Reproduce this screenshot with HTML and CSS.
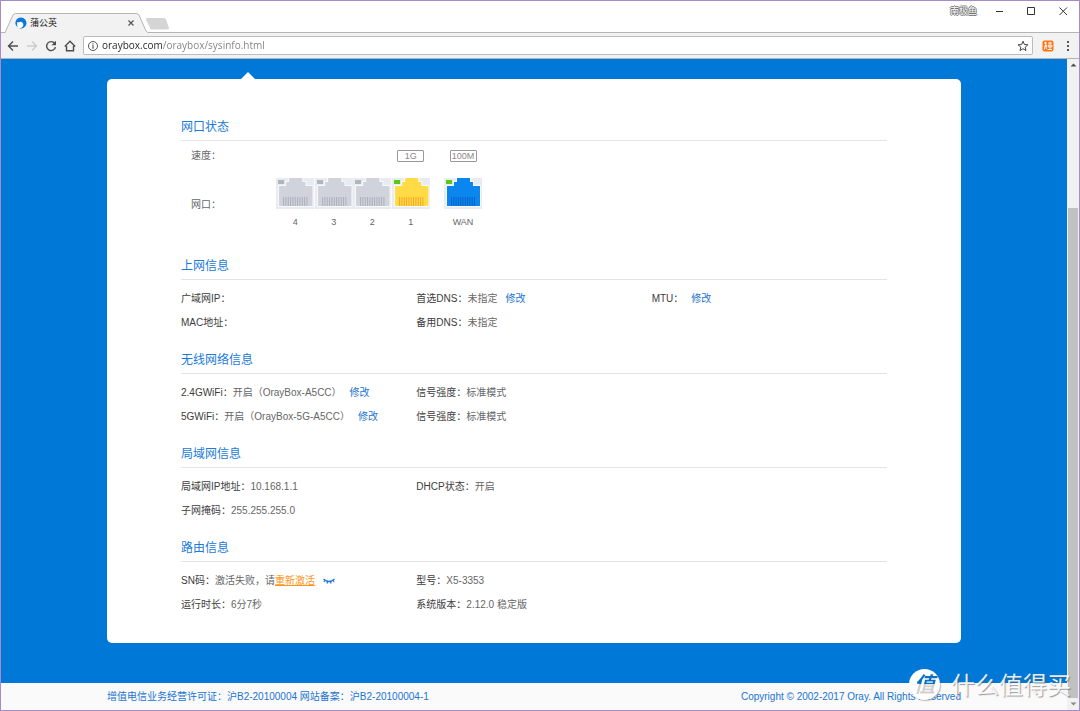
FILE: index.html
```
<!DOCTYPE html>
<html lang="zh-CN">
<head>
<meta charset="utf-8">
<meta name="viewport" content="width=device-width, initial-scale=1">
<title>蒲公英</title>
<link rel="stylesheet" href="styles.css">
</head>
<body>
<svg class="defs" aria-hidden="true">
  <defs>
    <symbol id="port" viewBox="0 0 38 31" preserveAspectRatio="none">
      <rect width="38" height="31" fill="#e8ebf2"/>
      <path d="M12 0H27V3H30V7H37V29H2V7H9V3H12Z" fill="#f8f9fc"/>
      <path d="M13 0H26V4H29V8H36V28H3V8H10V4H13Z" fill="currentColor"/>
      <path d="M7.5 19V28M9.800 19V28M12.100 19V28M14.400 19V28M16.700 19V28M19 19V28M21.300 19V28M23.600 19V28M25.900 19V28M28.200 19V28M30.500 19V28" class="pins"/>
      <rect x="2" y="2" width="6" height="4" class="led"/>
    </symbol>
  </defs>
</svg>
<div class="window">
  <header class="tabstrip">
    <div class="tab">
      <svg class="tab-shape" viewBox="0 0 166 20" aria-hidden="true">
        <path d="M0 19.500H4.500L12 2Q13 .5 14.500 .5H135Q137 .5 138 2L145 18Q146 19.500 148 19.500V20H0Z" fill="#f2f2f2"/>
        <path d="M0 19.500H4L12 2Q13 .5 14.500 .5H135Q137 .5 138 2L145 18Q146 19.500 148 19.500H166" fill="none" stroke="#b5b5b5"/>
        <path d="M145.500 5H163Q164.500 5 165 6.500L168 15Q168 16.500 166 16.500H151Q149.500 16.500 149 15L145 6.500Z" fill="#d5d5d5"/>
      </svg>
      <svg class="favicon" viewBox="0 0 12 12" aria-hidden="true"><path d="M6 .5A5.500 5.500 0 1 1 4.500 11.300Q7.500 11 8.300 8.500Q8.800 5.500 6 4.800Q4.500 4.500 3.500 5.500Q2.800 4.500 2 5.500Q1.600 6.500 2.500 7.200Q2.300 8.500 3 9.800L2.500 10.300A5.500 5.500 0 0 1 6 .5Z" fill="#0877d8"/><circle cx="5" cy="8" r="2.800" fill="#fff"/></svg>
      <span class="tab-title">蒲公英</span>
      <button class="tab-close" aria-label="关闭标签页"><svg viewBox="0 0 8 8"><path d="M1.500 1.500 6.500 6.500M6.500 1.500 1.500 6.500" stroke="#555" stroke-width="1.200"/></svg></button>
    </div>
    <div class="controls">
      <span class="user">南极鱼</span>
      <button aria-label="最小化"><svg viewBox="0 0 10 10"><path d="M2 5.500H9" stroke="#333"/></svg></button>
      <button aria-label="最大化"><svg viewBox="0 0 10 10"><path d="M1.500 1.500H8.500V8.500H1.500Z" stroke="#333" fill="none"/></svg></button>
      <button aria-label="关闭"><svg viewBox="0 0 10 10"><path d="M1.500 1.500 9 9M9 1.500 1.500 9" stroke="#333"/></svg></button>
    </div>
  </header>
  <nav class="toolbar">
    <button aria-label="后退"><svg viewBox="0 0 12 12"><path d="M11 6H1.500M6 1.500 1.500 6 6 10.500" class="ink"/></svg></button>
    <button aria-label="前进" disabled><svg viewBox="0 0 12 12"><path d="M1 6H10.500M6 1.500 10.500 6 6 10.500" class="ink faint"/></svg></button>
    <button aria-label="重新加载"><svg viewBox="0 0 12 12"><path d="M9.800 3.500A4.500 4.500 0 1 0 10.500 7.200" class="ink"/><path d="M11 .8V5.300H6.500Z" fill="#4d4d4d"/></svg></button>
    <button aria-label="主页"><svg viewBox="0 0 12 12"><path d="M.8 6.500 6 1.300 11.200 6.500M2.500 6V10.800H9.500V6" class="ink"/></svg></button>
    <div class="omnibox">
      <svg viewBox="0 0 12 12" aria-hidden="true"><circle cx="6" cy="6" r="4.500" fill="none" stroke="#555"/><path d="M6 5.200V8.700M6 3.200V4.400" stroke="#555" stroke-width="1.200"/></svg>
      <input class="url" type="text" aria-label="地址" value="oraybox.com/oraybox/sysinfo.html">
      <button aria-label="收藏"><svg viewBox="0 0 12 12"><path d="M6 1.200 7.400 4.500 10.900 4.800 8.200 7.100 9 10.600 6 8.700 3 10.600 3.800 7.100 1.100 4.800 4.600 4.500Z" fill="none" stroke="#444"/></svg></button>
    </div>
    <button aria-label="扩展"><svg viewBox="0 0 12 12"><rect x=".5" y=".5" width="11" height="11" rx="2" fill="#fb7413"/><path d="M2 3H5M3.500 1.800V4.500L2.300 9.500M2.500 6H5M4.200 4.500V9M6 3H10M8 1.800V4.300M6.200 5H9.800V7H6.200ZM8 5V9M5.500 9.500H10" fill="none" stroke="#fff" stroke-width=".9"/></svg></button>
    <button aria-label="菜单"><svg viewBox="0 0 12 12"><path d="M5 1H7V3H5ZM5 5H7V7H5ZM5 9H7V11H5Z" fill="#555"/></svg></button>
  </nav>
  <div class="viewport">
    <div class="page">
      <main class="backdrop">
        <div class="card">
          <section>
            <h2>网口状态</h2>
            <div class="ports">
              <div class="port-row speeds">
                <span class="port-label">速度：</span>
                <div class="lan"><span></span><span></span><span></span><span class="badge">1G</span></div>
                <div class="wan"><span class="badge">100M</span></div>
              </div>
              <div class="port-row sockets">
                <span class="port-label">网口：</span>
                <div class="lan">
                  <div class="port"><svg class="off"><use href="#port"/></svg><span>4</span></div>
                  <div class="port"><svg class="off"><use href="#port"/></svg><span>3</span></div>
                  <div class="port"><svg class="off"><use href="#port"/></svg><span>2</span></div>
                  <div class="port"><svg class="gigabit"><use href="#port"/></svg><span>1</span></div>
                </div>
                <div class="wan"><div class="port"><svg class="uplink"><use href="#port"/></svg><span>WAN</span></div></div>
              </div>
            </div>
          </section>
          <section>
            <h2>上网信息</h2>
            <dl>
              <div><dt>广域网IP：</dt></div>
              <div><dt>首选DNS：</dt><dd>未指定</dd><dd><a class="edit" href="#dns">修改</a></dd></div>
              <div><dt>MTU：</dt><dd><a class="edit" href="#mtu">修改</a></dd></div>
              <div><dt>MAC地址：</dt></div>
              <div><dt>备用DNS：</dt><dd>未指定</dd></div>
            </dl>
          </section>
          <section>
            <h2>无线网络信息</h2>
            <dl>
              <div><dt>2.4GWiFi：</dt><dd>开启（OrayBox-A5CC）</dd><dd><a class="edit" href="#wifi24">修改</a></dd></div>
              <div class="wide"><dt>信号强度：</dt><dd>标准模式</dd></div>
              <div><dt>5GWiFi：</dt><dd>开启（OrayBox-5G-A5CC）</dd><dd><a class="edit" href="#wifi5">修改</a></dd></div>
              <div class="wide"><dt>信号强度：</dt><dd>标准模式</dd></div>
            </dl>
          </section>
          <section>
            <h2>局域网信息</h2>
            <dl>
              <div><dt>局域网IP地址：</dt><dd>10.168.1.1</dd></div>
              <div class="wide"><dt>DHCP状态：</dt><dd>开启</dd></div>
              <div><dt>子网掩码：</dt><dd>255.255.255.0</dd></div>
            </dl>
          </section>
          <section>
            <h2>路由信息</h2>
            <dl>
              <div><dt>SN码：</dt><dd>激活失败，请<a class="activate" href="#activate">重新激活</a></dd><dd><button class="reveal" aria-label="显示SN码"><svg viewBox="0 0 12 8"><path d="M.5 2Q6 7 11.500 2M2 3.500 .8 5M4.500 4.500 4 6.500M7.500 4.500 8 6.500M10 3.500 11.200 5" fill="none" stroke="#1b74d1" stroke-width="1.200"/></svg></button></dd></div>
              <div class="wide"><dt>型号：</dt><dd>X5-3353</dd></div>
              <div><dt>运行时长：</dt><dd>6分7秒</dd></div>
              <div class="wide"><dt>系统版本：</dt><dd>2.12.0 稳定版</dd></div>
            </dl>
          </section>
        </div>
      </main>
      <footer class="footer">
        <div class="footer-inner">
          <span>增值电信业务经营许可证：沪B2-20100004 网站备案：沪B2-20100004-1</span>
          <span>Copyright © 2002-2017 Oray. All Rights Reserved</span>
        </div>
      </footer>
    </div>
    <div class="scrollbar" aria-hidden="true">
      <svg viewBox="0 0 12 12"><path d="M3.500 7.500H9.500L6.500 4.500Z" fill="#505050"/></svg>
      <div class="track"></div>
      <div class="thumb"></div>
      <svg viewBox="0 0 12 12"><path d="M3.500 4.500H9.500L6.500 7.500Z" fill="#8a8a8a"/></svg>
    </div>
  </div>
  <div class="watermark"><span class="seal">值</span><span>什么值得买</span></div>
</div>
</body>
</html>
```
FILE: styles.css
```
* { box-sizing: border-box; }
body {
  margin: 0;
  font: 10px/24px "Liberation Sans", "Noto Sans CJK SC", sans-serif;
  color: #666;
}
button { border: 0; padding: 0; background: none; display: flex; align-items: center; justify-content: center; }
svg { display: block; flex: none; }
a { text-decoration: none; }
.defs { position: absolute; width: 0; height: 0; }

.window {
  position: relative;
  min-height: 100vh;
  display: flex;
  flex-direction: column;
  border: 1px solid #a58bc9;
  background: #fff;
}

/* Browser chrome */
.tabstrip {
  height: 32px;
  display: flex;
  justify-content: space-between;
  align-items: flex-start;
  border-bottom: 1px solid #b5b5b5;
}
.tab {
  position: relative;
  width: 140px;
  height: 20px;
  margin-top: 12px;
  padding-left: 14px;
  display: flex;
  align-items: center;
  gap: 3px;
}
.tab-shape { position: absolute; left: 0; top: 0; width: 166px; height: 20px; overflow: visible; }
.favicon { position: relative; width: 12px; height: 12px; }
.tab-title { position: relative; flex: 1; font-size: 9px; line-height: 18px; color: #222; }
.tab-close { position: relative; width: 8px; height: 8px; margin-right: 6px; }
.tab-close svg { width: 8px; height: 8px; }
.controls { display: flex; align-items: center; height: 20px; gap: 22px; padding-right: 11px; }
.controls svg { width: 10px; height: 10px; }
.user {
  margin-right: -5px;
  font-size: 9px;
  line-height: 12px;
  color: #fff;
  text-shadow: 0 1px #666, 0 -1px #777, 1px 0 #666, -1px 0 #777;
}
.toolbar {
  height: 26px;
  padding: 0 6px;
  display: flex;
  align-items: center;
  gap: 7px;
  background: #f2f2f2;
  border-bottom: 1px solid #b0b3b8;
}
.toolbar svg { width: 12px; height: 12px; }
.ink { fill: none; stroke: #4d4d4d; stroke-width: 1.4; }
.faint { stroke: #ccc; }
.omnibox {
  flex: 1;
  height: 19px;
  margin-right: 2px;
  padding: 0 3px;
  display: flex;
  align-items: center;
  gap: 3px;
  border: 1px solid #bcbcbc;
  border-radius: 2px;
  background: #fff;
}
.toolbar > button:last-child { margin-left: 2px; width: 10px; }
.url {
  flex: 1;
  min-width: 0;
  height: 17px;
  border: 0;
  padding: 0;
  font: 10px/17px "Open Sans", sans-serif;
  color: transparent;
  background: linear-gradient(90deg, #222 60px, #808080 60px);
  -webkit-background-clip: text;
  background-clip: text;
}

/* Page */
.viewport { flex: 1; display: flex; }
.page { flex: 1; min-width: 0; display: flex; flex-direction: column; background: #0078d8; }
.backdrop { flex: 1; padding: 20px 24px 40px; }
.card {
  position: relative;
  max-width: 854px;
  margin: 0 auto;
  padding: 39px 74px 26px;
  border-radius: 5px;
  background: #fff;
}
.card::before {
  content: "";
  position: absolute;
  left: 134px;
  top: -7px;
  border: 7px solid transparent;
  border-top: 0;
  border-bottom-color: #fff;
}
section + section { margin-top: 16px; }
h2 {
  margin: 0;
  padding-bottom: 4px;
  border-bottom: 1px solid #e4e4e4;
  font-size: 12px;
  line-height: 18px;
  font-weight: 400;
  color: #1b7bd8;
}
dl { margin: 0; padding-top: 7px; display: grid; grid-template-columns: repeat(3, 1fr); }
dl > div { display: flex; align-items: center; height: 24px; white-space: nowrap; }
.wide { grid-column: span 2; }
dt { color: #3c3c3c; }
dd { margin: 0; }
.edit { margin-left: 8px; color: #1b74d1; }
.activate { color: #ff9517; text-decoration: underline; }
.reveal { width: 12px; height: 8px; margin-left: 8px; }
.reveal svg { width: 12px; height: 8px; }

/* Ports */
.ports { padding: 3px 0 5px; }
.port-row { display: flex; }
.port-label { width: 95px; padding-left: 10px; }
.lan { width: 154px; margin-right: 14px; display: grid; grid-template-columns: repeat(4, 1fr); }
.wan { width: 38px; }
.speeds { height: 24px; align-items: center; }
.speeds .wan { display: flex; justify-content: center; }
.badge {
  width: 27px;
  justify-self: center;
  border: 1px solid #999;
  border-radius: 1px;
  font-size: 9px;
  line-height: 10px;
  text-align: center;
  color: #888;
}
.sockets { padding-top: 10px; }
.sockets .port-label { padding-top: 15px; }
.port { text-align: center; font-size: 9px; line-height: 27px; }
.port svg { width: 100%; height: 31px; }
.off { color: #d0d3db; --pin: #acb0b8; --led: #b1b5bc; }
.gigabit { color: #ffdc46; --pin: #f5a52c; --led: #59c815; }
.uplink { color: #0a86ee; --pin: #0962c4; --led: #59c815; }
.pins { fill: none; stroke: var(--pin); }
.led { fill: var(--led); }

.footer { padding: 0 24px; background: #fafafa; color: #1b74d1; }
.footer-inner {
  max-width: 854px;
  margin: 0 auto;
  display: flex;
  justify-content: space-between;
  line-height: 27px;
  white-space: nowrap;
}

.scrollbar { width: 12px; display: flex; flex-direction: column; background: #f1f1f1; }
.scrollbar svg { width: 12px; height: 12px; }
.track { flex: 137; }
.thumb { flex: 490; margin: 0 1px; background: #c1c1c1; }

.watermark {
  position: absolute;
  right: 8px;
  bottom: 10px;
  display: flex;
  align-items: center;
  gap: 11px;
  font: 24px/32px "Noto Sans CJK SC", sans-serif;
  color: rgba(255, 255, 255, .9);
  text-shadow: 1px 1px 1px rgba(90, 90, 90, .6);
}
.seal {
  width: 31px;
  height: 31px;
  border-radius: 50%;
  font-size: 21px;
  font-weight: 700;
  font-style: italic;
  line-height: 29px;
  text-align: center;
  color: transparent;
  background: linear-gradient(#0a70c4 50%, #d0d0d0 50%) text, #fff;
  box-shadow: 1px 1px 1px rgba(90, 90, 90, .4);
  text-shadow: none;
}
```
